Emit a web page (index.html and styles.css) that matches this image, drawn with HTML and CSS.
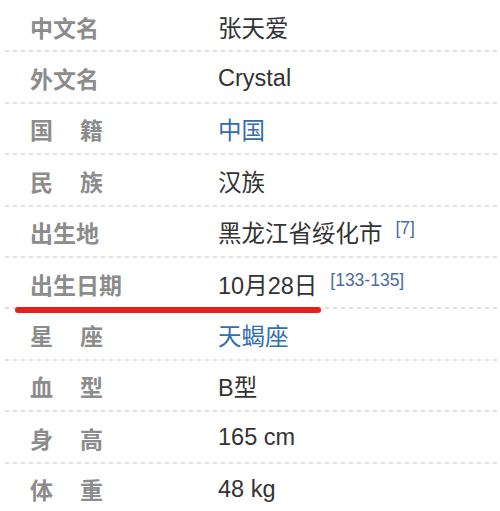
FILE: index.html
```html
<!DOCTYPE html>
<html lang="zh">
<head>
    <meta charset="UTF-8">
    <meta name="viewport" content="width=device-width, initial-scale=1.0">
    <link rel="stylesheet" href="styles.css">
</head>
<body>

    <div class="info-box">
        <div class="row"><span class="label">中文名</span><span class="value">张天爱</span></div>
        <div class="row"><span class="label">外文名</span><span class="value">Crystal</span></div>
        <div class="row"><span class="label wide">国籍</span><span class="value link">中国</span></div>
        <div class="row"><span class="label wide">民族</span><span class="value">汉族</span></div>
        <div class="row"><span class="label">出生地</span><span class="value">黑龙江省绥化市<sup class="ref">[7]</sup></span></div>
        <div class="row marked"><span class="label">出生日期</span><span class="value">10月28日<sup class="ref">[133-135]</sup></span></div>
        <div class="row"><span class="label wide">星座</span><span class="value link">天蝎座</span></div>
        <div class="row"><span class="label wide">血型</span><span class="value">B型</span></div>
        <div class="row"><span class="label wide">身高</span><span class="value">165 cm</span></div>
        <div class="row"><span class="label wide">体重</span><span class="value">48 kg</span></div>
    </div>

</body>
</html>
```

FILE: styles.css
```css
body {
    margin: 0;
    background-color: #fff;
    font-family: "Liberation Sans", "Noto Sans CJK SC", sans-serif;
}

.info-box {
    padding: 1px 0 0 5px;
}

.row {
    position: relative;
    display: flex;
    align-items: center;
    height: 51.4px;
    /* dotted separator under each row */
    background: repeating-linear-gradient(90deg, #e0e0e0 0 4px, transparent 4px 8px) left bottom / 100% 2px no-repeat;
}

.label {
    width: 213px;
    padding-left: 25px;
    font-size: 23px;
    font-weight: bold;
    color: #8c8c8c;
    box-sizing: border-box;
    flex-shrink: 0;
}

.label.wide {
    letter-spacing: 27px; /* two-char labels spread to three-char width */
}

.value {
    font-size: 23.5px;
    color: #333;
}

.value.link {
    color: #336dae;
}

.ref {
    font-size: 17.5px;
    color: #4a6b9e;
    margin-left: 13px;
    vertical-align: 8px;
}

/* red hand-drawn underline over the birthday row */
.marked::after {
    content: "";
    position: absolute;
    left: 10px;
    bottom: -4px;
    width: 306px;
    height: 6px;
    border-radius: 3px;
    background-color: #e4201b;
}
```
